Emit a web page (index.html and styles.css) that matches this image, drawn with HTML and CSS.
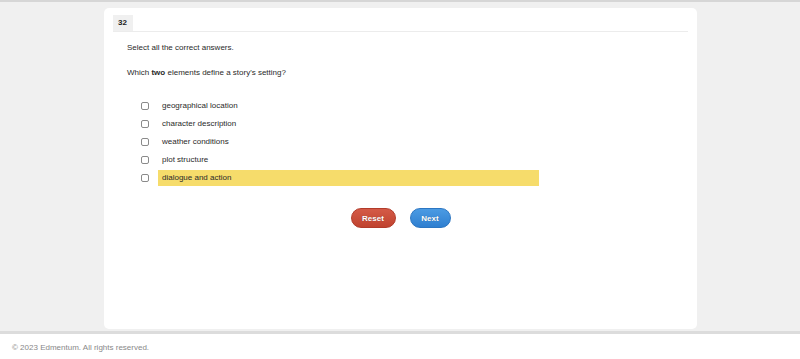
FILE: index.html
```html
<!DOCTYPE html>
<html>
<head>
<meta charset="utf-8">
<link rel="stylesheet" href="styles.css">
</head>
<body>
<div class="page">
  <div class="card">
    <div class="card-head">
      <span class="qnum">32</span>
    </div>
    <div class="card-body">
      <p class="instr">Select all the correct answers.</p>
      <p class="question">Which <b>two</b> elements define a story's setting?</p>
      <ul class="options">
        <li class="opt"><span class="box"></span><span class="label">geographical location</span></li>
        <li class="opt"><span class="box"></span><span class="label">character description</span></li>
        <li class="opt"><span class="box"></span><span class="label">weather conditions</span></li>
        <li class="opt"><span class="box"></span><span class="label">plot structure</span></li>
        <li class="opt"><span class="box"></span><span class="label hl">dialogue and action</span></li>
      </ul>
      <div class="actions">
        <button class="btn reset">Reset</button>
        <button class="btn next">Next</button>
      </div>
    </div>
  </div>
</div>
<footer class="footer">© 2023 Edmentum. All rights reserved.</footer>
</body>
</html>
```

FILE: styles.css
```css
* { box-sizing: border-box; }
html, body { margin: 0; padding: 0; }
body {
  width: 800px;
  height: 359px;
  overflow: hidden;
  background: #f0f0f0;
  font-family: "Liberation Sans", Arial, sans-serif;
  font-size: 8px;
  color: #2a2a2a;
}
.page {
  height: 331px;
  border-top: 2px solid #d6d6d6;
  padding: 6px 0 0 104px;
}
.card {
  width: 593px;
  height: 321px;
  background: #fff;
  border-radius: 5px;
  padding: 7px 9px 0 9px;
}
.card-head {
  height: 17px;
  border-bottom: 1px solid #ececec;
  display: flex;
}
.qnum {
  display: block;
  height: 16px;
  line-height: 16px;
  padding: 0 6px 0 5px;
  background: #f0f0f0;
  font-weight: bold;
  color: #222;
}
.card-body {
  padding: 11px 0 0 14px;
}
.instr, .question {
  margin: 0;
  line-height: 10px;
}
.question { margin-top: 15px; }
.options {
  list-style: none;
  margin: 20px 0 0 0;
  padding: 0 0 0 14px;
  display: flex;
  flex-direction: column;
  gap: 2px;
}
.opt {
  display: flex;
  align-items: center;
  height: 16px;
}
.box {
  width: 8px;
  height: 8px;
  border: 1px solid #8a8a8a;
  border-radius: 2px;
  background: #fff;
  margin-right: 9px;
}
.label {
  width: 381px;
  height: 16px;
  line-height: 16px;
  padding-left: 4px;
}
.hl { background: #f6dc6b; }
.actions {
  margin-top: 22px;
  margin-left: -14px;
  display: flex;
  justify-content: center;
  gap: 14px;
}
.btn {
  height: 20px;
  border-radius: 10px;
  border: 1px solid;
  font-family: "Liberation Sans", Arial, sans-serif;
  font-size: 8px;
  font-weight: bold;
  color: #fff;
  padding: 0;
  text-shadow: 0 0 1px rgba(0,0,0,0.3);
}
.reset {
  width: 45px;
  background: linear-gradient(#d45a47, #c0432f);
  border-color: #b23b2a;
}
.next {
  width: 41px;
  background: linear-gradient(#4b9be3, #2f7fd0);
  border-color: #2c76c2;
}
.footer {
  height: 28px;
  border-top: 3px solid #dcdcdc;
  background: #fff;
  padding-left: 12px;
  line-height: 27px;
  color: #888;
  font-size: 8px;
}
```
